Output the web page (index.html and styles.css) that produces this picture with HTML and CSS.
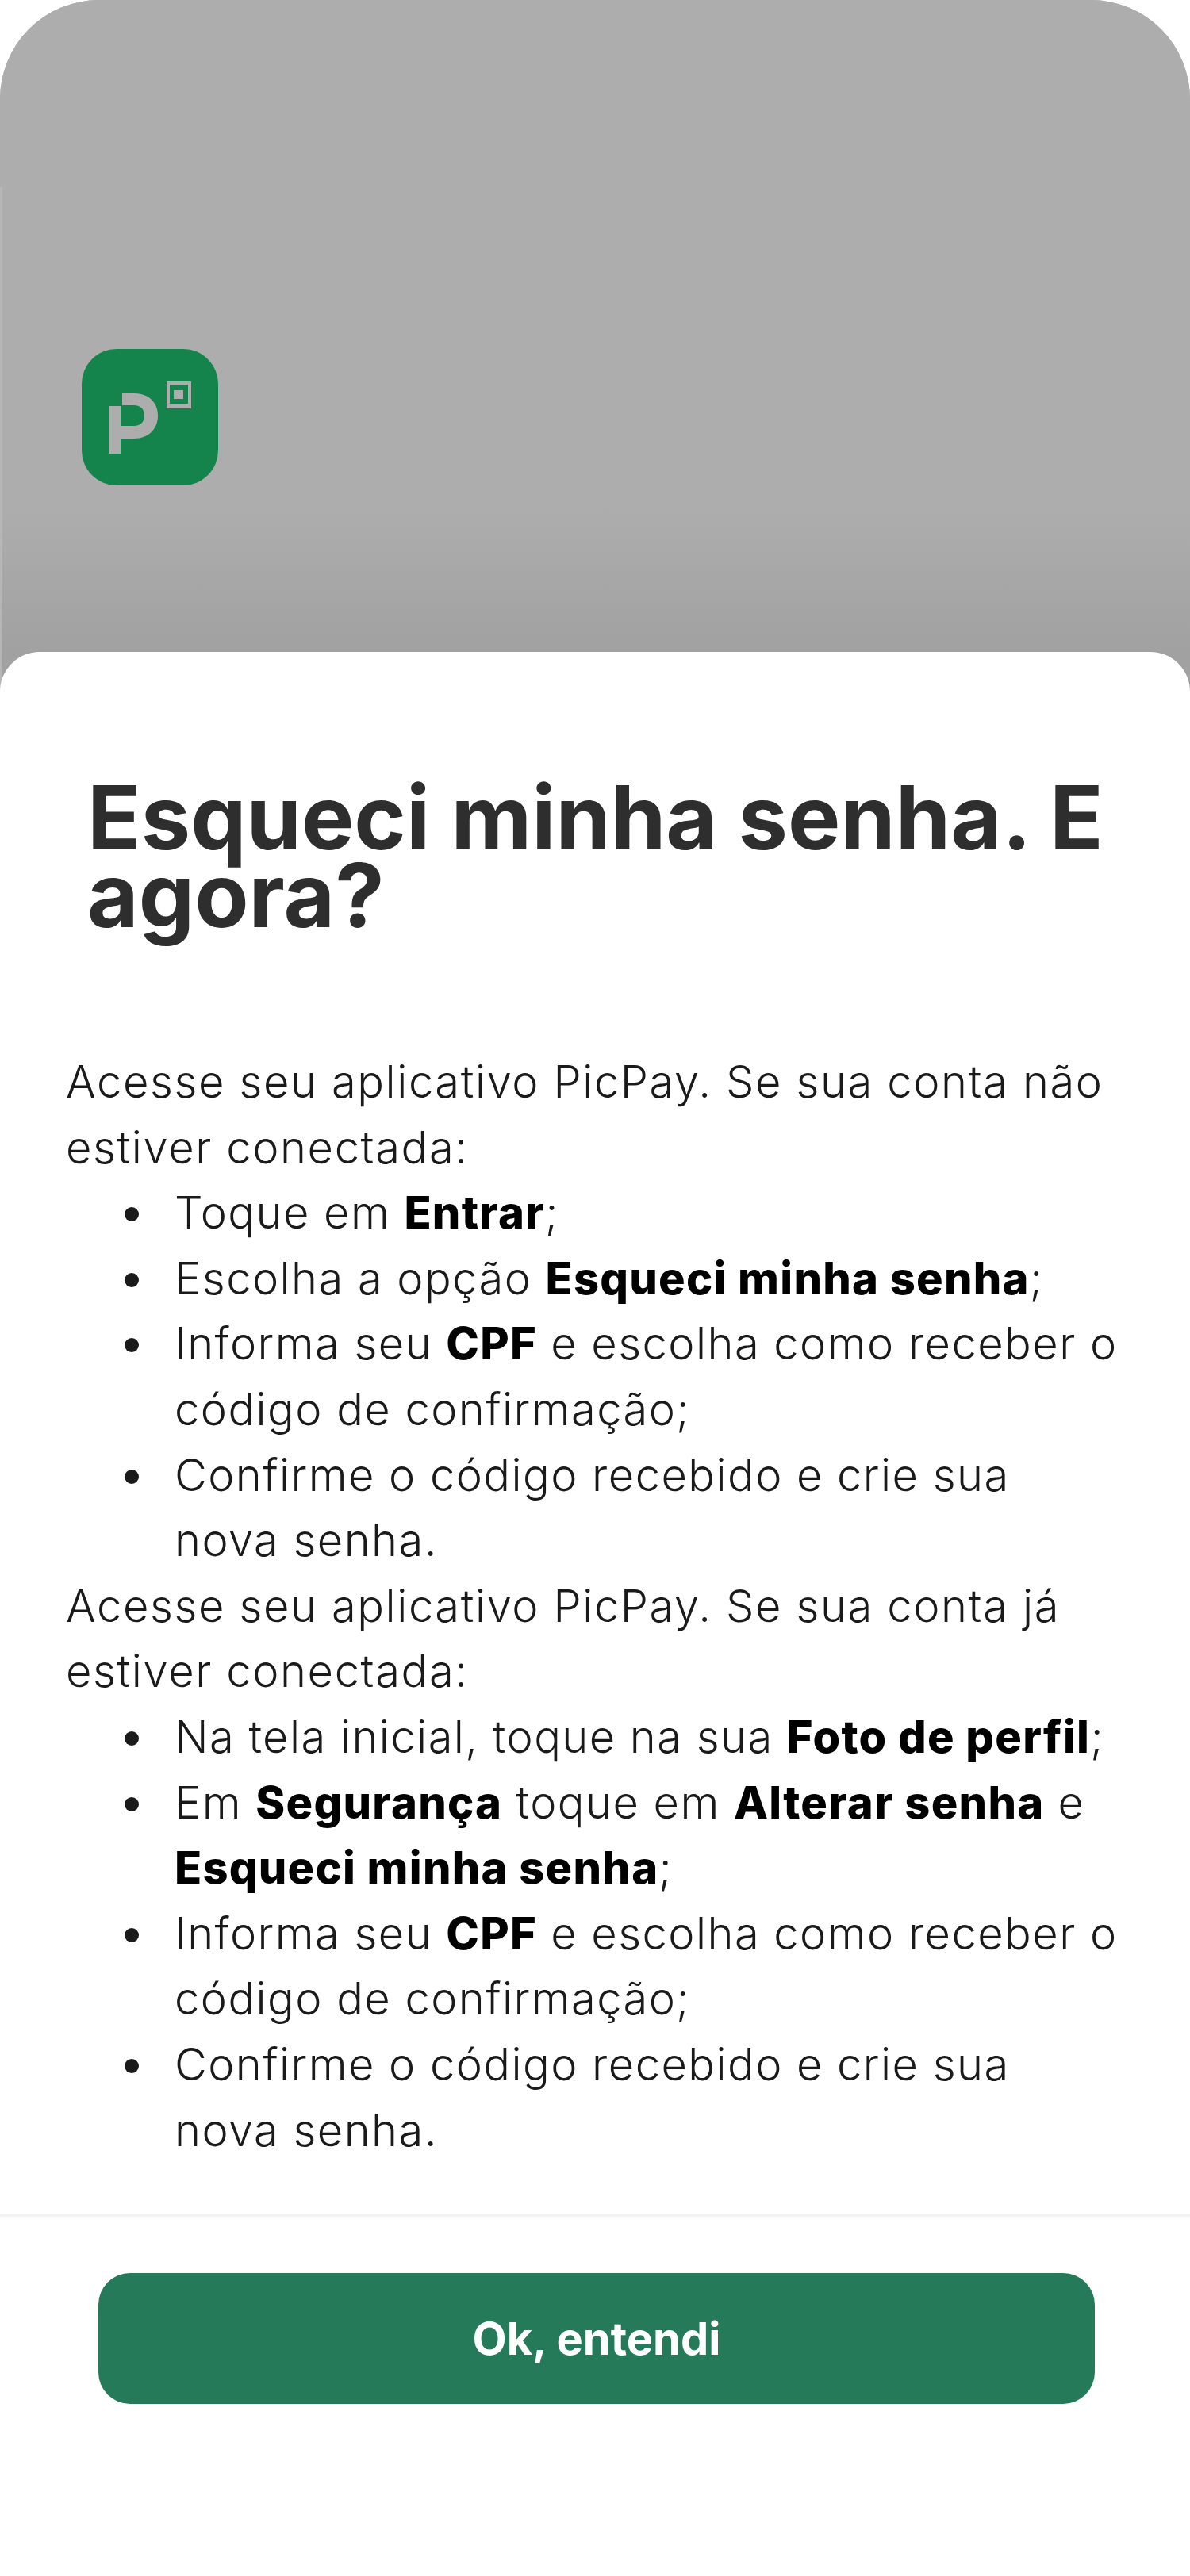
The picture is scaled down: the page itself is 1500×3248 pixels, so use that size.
FILE: index.html
```html
<!DOCTYPE html>
<html lang="pt-BR">
<head>
<meta charset="utf-8">
<title>Esqueci minha senha</title>
<link rel="stylesheet" href="styles.css">
</head>
<body>
<div class="screen">
  <header class="hero">
    <svg class="logo" viewBox="0 0 172 172" width="172" height="172" aria-hidden="true">
      <rect width="172" height="172" rx="44" fill="#14844c"/>
      <rect x="34" y="72" width="15" height="60" fill="#adadad"/>
      <path fill="#adadad" d="M51 56H66C85 56 96 68 96 84C96 101 84 113 66 113H49V97H66C74 97 79 92 79 84C79 76 74 71 66 71H51Z"/>
      <path fill-rule="evenodd" fill="#adadad" d="M107 41H138V75H107ZM111 45V69H134V45Z"/>
      <rect x="116" y="52" width="12" height="11" fill="#adadad"/>
    </svg>
  </header>
  <main class="sheet">
    <h1 class="title">Esqueci minha senha. E agora?</h1>
    <div class="content">
      <p>Acesse seu aplicativo PicPay. Se sua conta não estiver conectada:</p>
      <ul>
        <li>Toque em <b>Entrar</b>;</li>
        <li>Escolha a opção <b>Esqueci minha senha</b>;</li>
        <li>Informa seu <b>CPF</b> e escolha como receber o código de confirmação;</li>
        <li>Confirme o código recebido e crie sua nova senha.</li>
      </ul>
      <p>Acesse seu aplicativo PicPay. Se sua conta já estiver conectada:</p>
      <ul>
        <li>Na tela inicial, toque na sua <b>Foto de perfil</b>;</li>
        <li>Em <b>Segurança</b> toque em <b>Alterar senha</b> e <b>Esqueci minha senha</b>;</li>
        <li>Informa seu <b>CPF</b> e escolha como receber o código de confirmação;</li>
        <li>Confirme o código recebido e crie sua nova senha.</li>
      </ul>
    </div>
    <footer class="actions">
      <button class="primary" type="button">Ok, entendi</button>
    </footer>
  </main>
</div>
</body>
</html>
```
FILE: styles.css
```css
* { box-sizing: border-box; }
html, body { margin: 0; padding: 0; background: #fff; }
body { font-family: "Inter", "Liberation Sans", sans-serif; }
.screen {
  width: 1500px;
  height: 3248px;
  display: flex;
  flex-direction: column;
  border-radius: 125px 125px 0 0;
  overflow: hidden;
  background: #adadad;
}
.hero {
  position: relative;
  height: 872px;
  flex: none;
  margin-bottom: -50px;
  padding: 440px 0 0 103px;
  background: linear-gradient(to bottom, #adadad 0, #adadad 640px, #a1a1a1 822px);
}
.hero::before {
  content: "";
  position: absolute;
  left: 0;
  top: 236px;
  bottom: 0;
  width: 3px;
  background: #b6b6b6;
}
.logo { display: block; }
.sheet {
  flex: 1;
  position: relative;
  background: #fff;
  border-radius: 50px 50px 0 0;
  display: flex;
  flex-direction: column;
}
.title {
  margin: 0;
  padding: 160px 83px 0 110px;
  font-size: 111.5px;
  line-height: 98px;
  font-weight: 700;
  color: #2e2e2e;
}
.content {
  padding: 145px 85px 0 83px;
  font-size: 56px;
  font-weight: 350;
  line-height: 82.6px;
  letter-spacing: 1.45px;
  color: #1a1a1a;
}
.content p { margin: 0; letter-spacing: 1.6px; }
.content ul { margin: 0; padding: 0 0 0 117px; }
.content li { padding-left: 20px; }
.content b { font-weight: 800; letter-spacing: 1.25px; color: #000; }
.actions {
  margin-top: 65px;
  border-top: 3px solid #f3f3f3;
  padding: 71px 120px 0 124px;
}
.primary {
  display: block;
  width: 100%;
  height: 165px;
  border: 0;
  border-radius: 40px;
  background: #257a59;
  color: #fff;
  font: 700 56px "Inter", "Liberation Sans", sans-serif;
}
```
